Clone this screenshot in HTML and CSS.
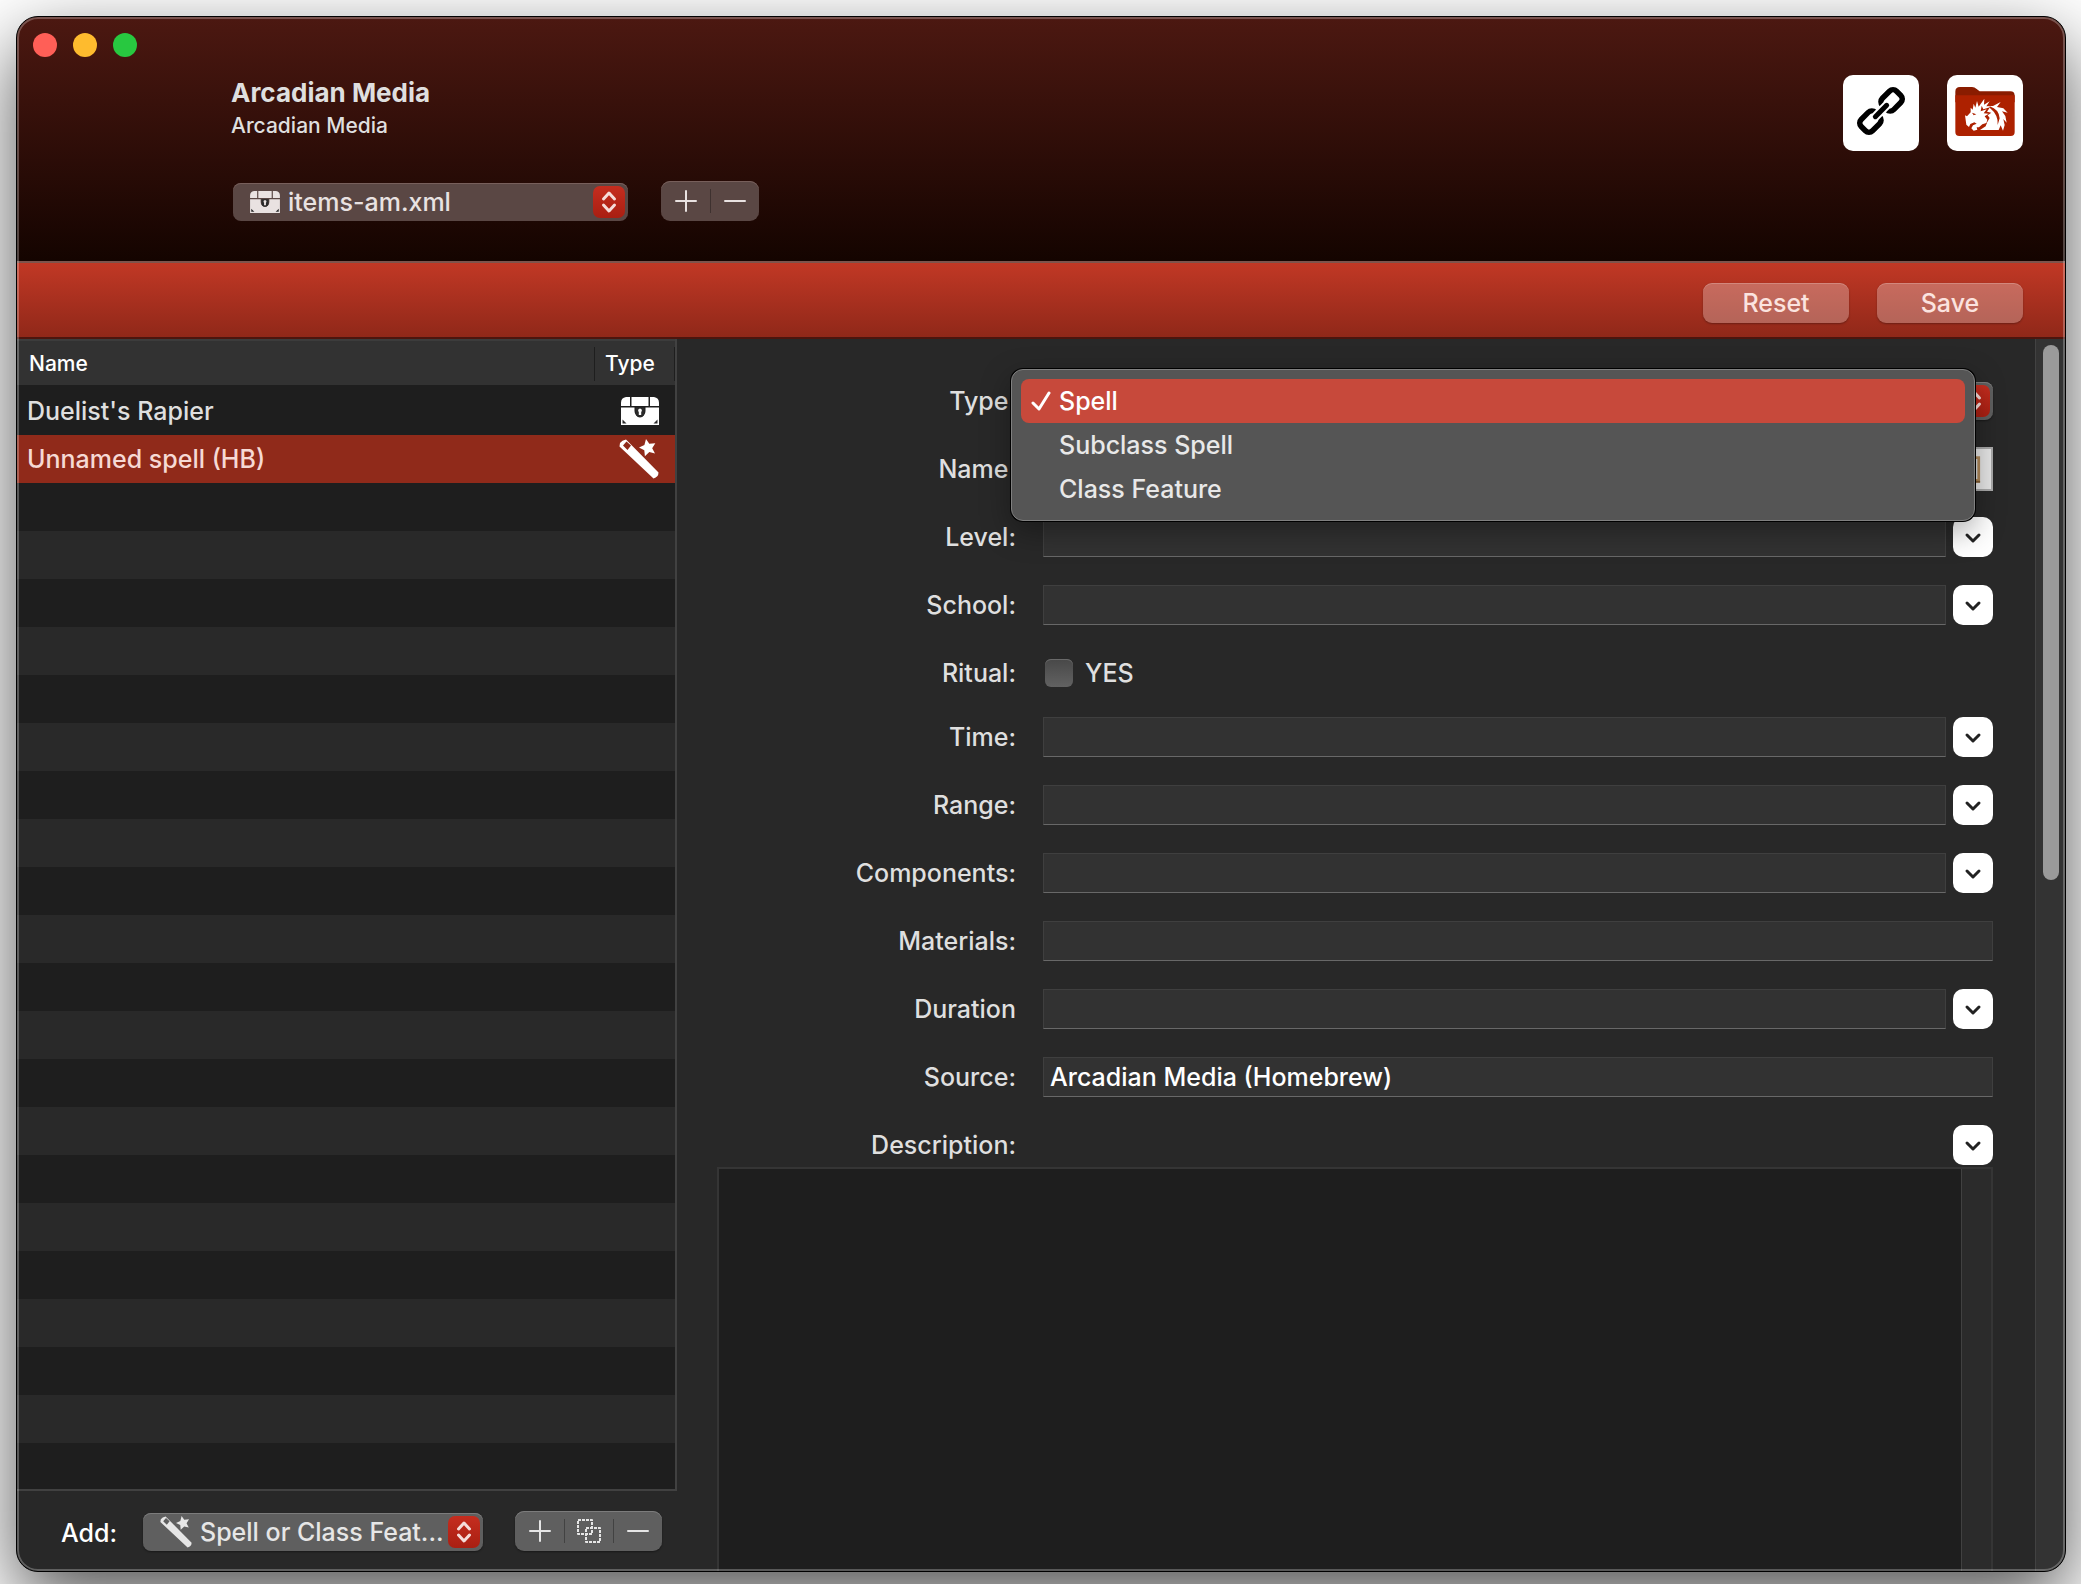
FILE: index.html
```html
<!DOCTYPE html>
<html lang="en">
<head>
<meta charset="utf-8">
<title>Arcadian Media</title>
<link rel="stylesheet" href="styles.css">
</head>
<body>
<svg class="sprite" aria-hidden="true">
  <symbol id="chest" viewBox="0 0 38 28">
    <path fill="currentColor" d="M5 0h4v9H0V6a6 6 0 0 1 5-6zM10.500 0h17v9h-17zM29 0h4a6 6 0 0 1 5 6v3h-9zM0 10.500h13.500v3.500a5.500 6.500 0 0 0 11 0v-3.500H38V28H0z"/>
    <path class="notch" d="M14.500 10.500h9v4a4.500 5.500 0 0 1-9 0z"/>
    <path fill="currentColor" d="M19 11.500a2 2 0 0 1 1.200 3.500v3h-2.400v-3a2 2 0 0 1 1.200-3.500z"/>
    <path class="notch" d="M1.500 22.500l4 4h-4zM36.500 22.500l-4 4h4z"/>
  </symbol>
  <symbol id="wand" viewBox="0 0 40 40">
    <path fill="currentColor" fill-rule="evenodd" d="M1 4Q3 1 7 .500L39.500 33.500Q39.500 38 34.500 39.500L.500 7.500zM4 6.500L8.500 11L12 6.500L7.500 2.500z"/>
    <path fill="currentColor" d="M27 0l3.300 4.800 6-.6-3.100 5 2.800 5.200-5.700-1.300-4.400 4.200-.6-6-5.300-2.700 5.400-2.500z"/>
  </symbol>
  <symbol id="updown" viewBox="0 0 32 32">
    <path class="line thick" d="M10.500 13L16 7l5.500 6M10.500 19L16 25l5.500-6"/>
  </symbol>
  <symbol id="down" viewBox="0 0 40 40">
    <path class="line thick" d="M14 18l6 6 6-6"/>
  </symbol>
  <symbol id="plus" viewBox="0 0 24 24"><path class="line" d="M2 12h20M12 2v20"/></symbol>
  <symbol id="minus" viewBox="0 0 24 24"><path class="line" d="M2 12h20"/></symbol>
  <symbol id="copy" viewBox="0 0 24 24">
    <path class="line dashed" d="M1 1h14v14H1zM9 9h14v14H9z"/>
  </symbol>
</svg>

<main class="window">
  <header class="titlebar">
    <div class="lights">
      <button class="light close" aria-label="Close"></button>
      <button class="light minimise" aria-label="Minimise"></button>
      <button class="light expand" aria-label="Zoom"></button>
    </div>
    <div class="heading">
      <div class="titles">
        <h1>Arcadian Media</h1>
        <p>Arcadian Media</p>
      </div>
      <div class="tiles">
        <button class="tile" aria-label="Link">
          <svg viewBox="0 0 76 76">
            <g transform="rotate(-45 38 36)" fill="none" stroke="#000" stroke-linecap="round">
              <rect x="43" y="28" width="20" height="16" rx="5" stroke-width="5.500"/>
              <rect x="13" y="28" width="20" height="16" rx="5" stroke-width="5.500"/>
              <path stroke="#fff" stroke-width="9" stroke-linecap="butt" d="M28 36H48"/>
              <path stroke-width="5" d="M30 36H46"/>
            </g>
          </svg>
        </button>
        <button class="tile" aria-label="Homebrew folder">
          <svg viewBox="0 0 228 228">
            <path fill="#8a1c00" d="M25 50q0-14 14-14h36q8 0 14 6l9 7h92q13 0 13 13v20H25z"/>
            <path fill="#ad2100" d="M25 61h178v110q0 12-12 12H37q-12 0-12-12z"/>
            <path fill="#fff" d="M54 121l6 3 11-12 0-14 6 6 3-18 5 12 5-20 5 17 17-24-1 18 17-10-10 15 20-1 23-12-11 15 19 4 13 13-17-4 10 14 4 20-10-11 4 18-5 17-7-16-6 14H99l17-11 4-11-14 5-10 9-7 0 2 7-11 3-7-7 5-9 11-5-7-4-12 5-4 9-8-7z"/>
            <path fill="#ad2100" d="M75 113l13 5-8 3zM104 92l-3 17 18-6-9 12 15 1-12 8 8 10-4 14 11-19-6-8 11-8-13-3 9-13-20 6zM128 94q28 9 30 36l-6 20q3-30-24-52z"/>
            <path fill="#fff" d="M126 162q16-9 14-32 16 14 8 32z"/>
          </svg>
        </button>
      </div>
    </div>
    <div class="file-row">
      <span class="popup file-popup">
        <svg class="popup-chest"><use href="#chest"/></svg>
        <select aria-label="File"><option>items-am.xml</option></select>
        <svg class="stepper"><use href="#updown"/></svg>
      </span>
      <div class="segments">
        <button aria-label="Add file"><svg><use href="#plus"/></svg></button>
        <button aria-label="Remove file"><svg><use href="#minus"/></svg></button>
      </div>
    </div>
  </header>

  <div class="toolbar">
    <button class="action">Reset</button>
    <button class="action">Save</button>
  </div>

  <div class="content">
    <section class="sidebar">
      <div class="list">
        <table>
          <thead><tr><th scope="col">Name</th><th scope="col" class="type">Type</th></tr></thead>
          <tbody>
            <tr><td>Duelist's Rapier</td><td class="type"><svg class="icon-chest" role="img" aria-label="Item"><use href="#chest"/></svg></td></tr>
            <tr class="selected"><td>Unnamed spell (HB)</td><td class="type"><svg class="icon-wand" role="img" aria-label="Spell"><use href="#wand"/></svg></td></tr>
          </tbody>
        </table>
      </div>
      <div class="add-bar">
        <label for="add">Add:</label>
        <span class="popup add-popup">
          <svg class="popup-wand"><use href="#wand"/></svg>
          <select id="add"><option>Spell or Class Feat...</option></select>
          <svg class="stepper"><use href="#updown"/></svg>
        </span>
        <div class="segments">
          <button aria-label="Add"><svg><use href="#plus"/></svg></button>
          <button aria-label="Duplicate"><svg><use href="#copy"/></svg></button>
          <button aria-label="Remove"><svg><use href="#minus"/></svg></button>
        </div>
      </div>
    </section>

    <form class="form">
      <div class="row">
        <label for="type">Type:</label>
        <div class="control">
          <span class="popup type-popup">
            <select id="type"><option>Spell</option></select>
            <svg class="stepper"><use href="#updown"/></svg>
          </span>
          <div class="menu">
            <button type="button" class="current"><svg viewBox="0 0 20 20"><path class="line check" d="M2 12l6 6L18 2"/></svg>Spell</button>
            <button type="button">Subclass Spell</button>
            <button type="button">Class Feature</button>
          </div>
        </div>
      </div>
      <div class="row">
        <label for="name">Name:</label>
        <div class="control">
          <input type="text" id="name">
          <button type="button" class="clipboard" aria-label="Paste">
            <svg viewBox="0 0 44 44"><path fill="#b0895a" d="M9 8h23v29H9z"/><path fill="#d8dadd" d="M12 11h17v22H12z"/><path fill="#777" d="M15 8h11v4H15z"/><path fill="#7d5a33" d="M9 35h23v2H9z"/></svg>
          </button>
        </div>
      </div>
      <div class="row"><label for="level">Level:</label><div class="control"><input type="text" id="level"><button type="button" class="drop" aria-label="Level choices"><svg><use href="#down"/></svg></button></div></div>
      <div class="row"><label for="school">School:</label><div class="control"><input type="text" id="school"><button type="button" class="drop" aria-label="School choices"><svg><use href="#down"/></svg></button></div></div>
      <div class="row ritual"><span class="caption">Ritual:</span><div class="control"><input type="checkbox" id="ritual"><label for="ritual">YES</label></div></div>
      <div class="row"><label for="time">Time:</label><div class="control"><input type="text" id="time"><button type="button" class="drop" aria-label="Time choices"><svg><use href="#down"/></svg></button></div></div>
      <div class="row"><label for="range">Range:</label><div class="control"><input type="text" id="range"><button type="button" class="drop" aria-label="Range choices"><svg><use href="#down"/></svg></button></div></div>
      <div class="row"><label for="components">Components:</label><div class="control"><input type="text" id="components"><button type="button" class="drop" aria-label="Component choices"><svg><use href="#down"/></svg></button></div></div>
      <div class="row"><label for="materials">Materials:</label><div class="control"><input type="text" id="materials"></div></div>
      <div class="row"><label for="duration">Duration</label><div class="control"><input type="text" id="duration"><button type="button" class="drop" aria-label="Duration choices"><svg><use href="#down"/></svg></button></div></div>
      <div class="row"><label for="source">Source:</label><div class="control"><input type="text" id="source" value="Arcadian Media (Homebrew)"></div></div>
      <div class="description">
        <div class="row"><label for="description">Description:</label><div class="control end"><button type="button" class="drop" aria-label="Description choices"><svg><use href="#down"/></svg></button></div></div>
        <div class="editor"><textarea id="description"></textarea><div class="editor-track"></div></div>
      </div>
    </form>
    <div class="track"><div class="thumb"></div></div>
  </div>
</main>
</body>
</html>
```
FILE: styles.css
```css
* { box-sizing: border-box; }

body {
  margin: 0;
  height: 100vh;
  padding: 16px 15px 12px 16px;
  display: flex;
  overflow: hidden;
  background: #fff;
  color: #dfdfdf;
  font: 500 25px/36px Inter, "Liberation Sans", sans-serif;
}

button, input, select, textarea {
  margin: 0;
  padding: 0;
  border: 0;
  background: none;
  color: inherit;
  font: inherit;
  appearance: none;
  outline: none;
}

svg { display: block; flex: none; }
.sprite { position: absolute; width: 0; height: 0; }
.line { fill: none; stroke: currentColor; stroke-width: 2; stroke-linecap: round; stroke-linejoin: round; }
.thick { stroke-width: 3; }
.check { stroke-width: 3; }
.dashed { stroke-width: 2; stroke-dasharray: 3 1; stroke-linecap: butt; }
.notch { fill: #2a2a2a; }

.window {
  position: relative;
  flex: 1;
  min-width: 0;
  display: flex;
  flex-direction: column;
  overflow: hidden;
  border: 1px solid #000;
  border-radius: 22px;
  background: #282828;
  box-shadow: 0 28px 76px rgba(0, 0, 0, 0.68);
}

/* light rim just inside the window edge */
.window::after {
  content: "";
  position: absolute;
  inset: 0;
  border: 2px solid rgba(255, 255, 255, 0.26);
  border-radius: 21px;
  pointer-events: none;
}

.titlebar {
  flex: none;
  height: 244px;
  padding: 16px 42px 0 16px;
  background: linear-gradient(#4c1811, #140400);
}

.lights { display: flex; gap: 16px; }
.light { width: 24px; height: 24px; border-radius: 50%; }
.close { background: #ff5f57; }
.minimise { background: #febb2e; }
.expand { background: #28c840; }

.heading { display: flex; justify-content: space-between; height: 66px; margin: 18px 0 40px 198px; }
.heading h1 { margin: 0; font-size: 26px; line-height: 36px; font-weight: 700; }
.heading p { margin: 0; font-size: 21px; line-height: 30px; }
.tiles { display: flex; gap: 28px; }
.tile { width: 76px; height: 76px; border-radius: 10px; background: #fff; }

.file-row { display: flex; align-items: flex-end; gap: 33px; margin-left: 200px; }

.popup {
  display: flex;
  align-items: center;
  height: 38px;
  padding: 0 3px 0 17px;
  gap: 8px;
  border-radius: 8px;
  background: #5f5f5f;
  color: #e6e6e6;
  box-shadow: inset 0 1px 0 #7c7c7c, 0 1px 2px rgba(0, 0, 0, 0.4);
}
.popup select { flex: 1; min-width: 0; height: 36px; }
.titlebar .popup, .titlebar .segments { background: #5a4744; color: #e9e2e1; box-shadow: inset 0 1px 0 #775f5b; }
.titlebar .notch { fill: #5a4744; }
.file-popup { width: 395px; }
.add-popup { width: 340px; }
.add-popup select { margin-right: -8px; }
.type-popup { flex: 1; }
.popup-chest { width: 30px; height: 22px; }
.popup-wand { width: 32px; height: 32px; }
.stepper {
  width: 32px;
  height: 32px;
  border-radius: 7px;
  background: linear-gradient(#c52d1f, #a91f12);
  color: #f5dcd9;
}

.segments {
  display: flex;
  height: 40px;
  border-radius: 9px;
  background: #5f5f5f;
  color: #e6e6e6;
  box-shadow: inset 0 1px 0 #7c7c7c, 0 1px 2px rgba(0, 0, 0, 0.4);
}
.segments button { position: relative; width: 49px; display: flex; align-items: center; justify-content: center; }
.segments button + button::before {
  content: "";
  position: absolute;
  left: 0;
  top: 8px;
  bottom: 8px;
  border-left: 1px solid rgba(0, 0, 0, 0.3);
}
.segments svg { width: 24px; height: 24px; }

.toolbar {
  flex: none;
  height: 78px;
  padding: 20px 42px 0;
  display: flex;
  justify-content: flex-end;
  align-items: flex-start;
  gap: 28px;
  border-top: 2px solid #7d544c;
  border-bottom: 2px solid #4c150e;
  background: linear-gradient(#c13825, #902819);
}
.action {
  width: 146px;
  height: 40px;
  border-radius: 9px;
  background: rgba(255, 255, 255, 0.27);
  color: #fbe3df;
  box-shadow: inset 0 1px 0 rgba(255, 255, 255, 0.2), 0 1px 2px rgba(0, 0, 0, 0.3);
}

.content { flex: 1; min-height: 0; display: flex; }

.sidebar { flex: none; width: 660px; display: flex; flex-direction: column; }
.list {
  flex: 1;
  border-right: 2px solid #414141;
  border-bottom: 2px solid #414141;
  background: repeating-linear-gradient(#292929 0 48px, #1e1e1e 48px 96px);
}
.list table { width: 100%; border-spacing: 0; table-layout: fixed; }
.list tr { height: 48px; }
.list th, .list td { padding: 0 0 0 10px; text-align: left; vertical-align: middle; }
.list th {
  height: 48px;
  padding-top: 2px;
  padding-left: 12px;
  background: #323232;
  border-top: 2px solid #3c3c3c;
  border-bottom: 2px solid #1e1e1e;
  color: #fff;
  font-size: 21px;
  font-weight: 500;
}
.list .type { width: 81px; }
.list th.type {
  padding-left: 11px;
  background: linear-gradient(#1e1e1e, #1e1e1e) 0 6px / 1px 34px no-repeat,
    linear-gradient(#1e1e1e, #1e1e1e) 100% 6px / 1px 34px no-repeat, #323232;
}
.list td.type { padding: 0 16px 0 0; color: #fff; }
.list td svg { margin-left: auto; }
.icon-chest { width: 38px; height: 28px; }
.icon-wand { width: 40px; height: 40px; }
.selected { background: #902a1a; color: #f6d9d4; }

.add-bar { flex: none; height: 80px; padding: 20px 0 0 44px; display: flex; align-items: flex-start; }
.add-bar label { width: 82px; line-height: 44px; color: #fff; }
.add-bar .popup { margin: 2px 32px 0 0; }

.form {
  flex: 1;
  min-width: 0;
  padding: 42px 42px 0 40px;
  display: flex;
  flex-direction: column;
  gap: 28px;
}
.row { flex: none; height: 40px; display: grid; grid-template-columns: 299px 1fr; column-gap: 27px; align-items: center; }
.row > label, .caption { text-align: right; }
.control { position: relative; display: flex; align-items: center; gap: 7px; height: 40px; }
.control.end { justify-content: flex-end; }
.control input[type="text"] {
  flex: 1;
  min-width: 0;
  height: 40px;
  padding: 0 6px;
  border: 1px solid #3f3f3f;
  border-bottom: 1px solid #686868;
  background: #323232;
  color: #fff;
}
.drop { width: 40px; height: 40px; border-radius: 10px; background: #fff; color: #222; }
.drop svg { width: 40px; height: 40px; }
.clipboard { width: 44px; height: 44px; border: 2px solid #a9a9a9; background: #e6e6e6; }
.clipboard svg { width: 40px; height: 40px; }

.ritual { height: 36px; padding-top: 2px; }
.ritual .control { height: 32px; gap: 12px; padding-left: 2px; }
.ritual input {
  width: 28px;
  height: 28px;
  border-radius: 6px;
  background: linear-gradient(#484848, #626262);
  box-shadow: inset 0 1px 0 #6a6a6a;
}

.menu {
  position: absolute;
  z-index: 1;
  left: -32px;
  right: 18px;
  top: -12px;
  padding: 9px;
  border: 1px solid #808080;
  border-radius: 12px;
  background: #555;
  box-shadow: 0 0 0 1px #000, 0 10px 30px rgba(0, 0, 0, 0.35);
}
.menu button { display: flex; align-items: center; gap: 8px; width: 100%; height: 44px; padding-left: 38px; border-radius: 8px; color: #e8e8e8; }
.menu .current { padding-left: 10px; background: #c7493b; color: #fff; }
.menu svg { width: 20px; height: 20px; }

.description { flex: 1; min-height: 0; display: flex; flex-direction: column; gap: 2px; }
.editor { flex: 1; display: flex; border: 2px solid #353535; border-bottom: 0; }
.editor textarea { flex: 1; padding: 4px 6px; resize: none; background: #1e1e1e; }
.editor-track { width: 30px; border-left: 1px solid #414141; background: #2b2b2b; }

.track { flex: none; width: 30px; padding: 6px 0 0 7px; border-left: 1px solid #424242; background: #333; }
.thumb { width: 16px; height: 47%; max-height: 535px; border-radius: 8px; background: #9a9a9a; }
```
